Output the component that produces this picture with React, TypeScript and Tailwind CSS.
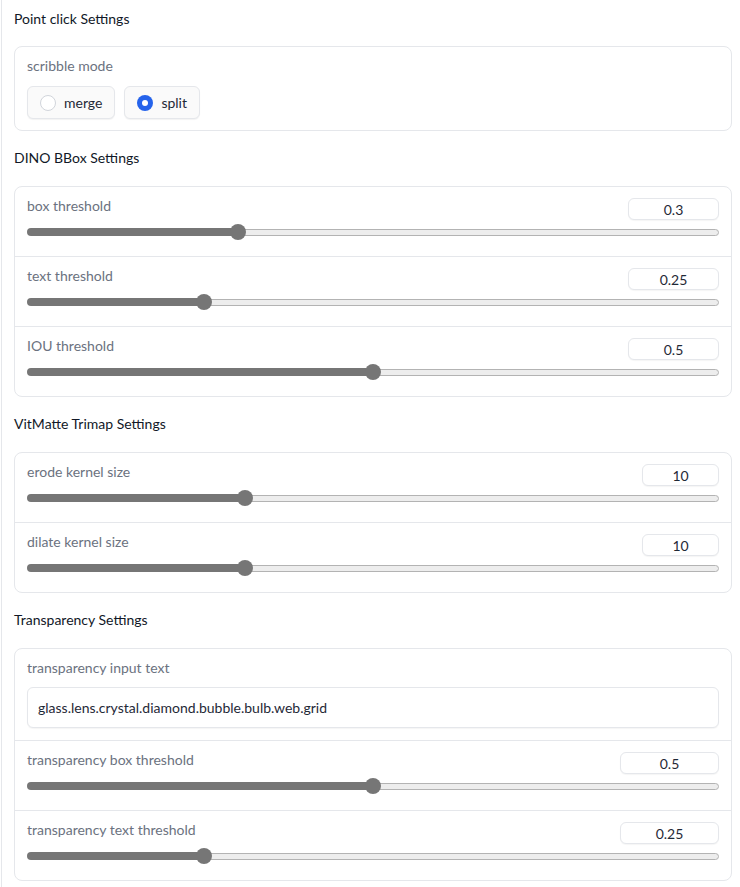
import React from "react";

const FONT = { fontFamily: "Lato, 'Noto Sans', 'Liberation Sans', sans-serif" };

function NumBox({ value, w }: { value: string; w: string }) {
  return (
    <div
      className={`${w} h-[22px] mt-[2px] rounded-md border border-[#e5e7eb] bg-white shadow-[0_1px_1px_rgba(0,0,0,0.04)] flex items-center justify-center text-[14px] text-[#1f2937]`}
    >
      {value}
    </div>
  );
}

function Slider({ frac }: { frac: number }) {
  const width = 692;
  const center = 8 + frac * (width - 16);
  return (
    <div className="mt-[3px] h-[18px] flex items-center">
      <div className="h-[8px] rounded-l-full bg-[#767676]" style={{ width: center }} />
      <div className="relative z-10 -mx-2 h-4 w-4 shrink-0 rounded-full bg-[#767676]" />
      <div className="h-[7px] flex-1 rounded-r-full border border-[#b3b3b3] bg-[#ededed]" />
    </div>
  );
}

function SliderRow({
  label,
  value,
  frac,
  boxW,
  first,
}: {
  label: string;
  value: string;
  frac: number;
  boxW: string;
  first?: boolean;
}) {
  return (
    <div className={`px-3 pt-[9px] pb-[15px] ${first ? "" : "border-t border-[#e5e7eb]"}`}>
      <div className="flex items-start justify-between">
        <div className="text-[14px] leading-[20px] text-[#6b7280]">{label}</div>
        <NumBox value={value} w={boxW} />
      </div>
      <Slider frac={frac} />
    </div>
  );
}

function Header({ children, first }: { children: React.ReactNode; first?: boolean }) {
  return (
    <div
      className={`${first ? "pt-[9px] pb-[17px]" : "mt-[9px] pt-[8px] pb-[18px]"} text-[14px] leading-[20px] font-normal text-[#111827]`}
    >
      {children}
    </div>
  );
}

function Card({ children }: { children: React.ReactNode }) {
  return <div className="rounded-lg border border-[#e5e7eb] bg-white">{children}</div>;
}

function Radio({ label, checked }: { label: string; checked?: boolean }) {
  return (
    <div className="h-[33px] flex items-center gap-2 px-[12px] rounded-md border border-[#e5e7eb] bg-[#fafafa] shadow-[0_1px_1px_rgba(0,0,0,0.05)]">
      {checked ? (
        <div className="w-4 h-4 rounded-full bg-[#2563eb] flex items-center justify-center">
          <div className="w-[6px] h-[6px] rounded-full bg-white" />
        </div>
      ) : (
        <div className="w-4 h-4 rounded-full border border-[#d1d5db] bg-white" />
      )}
      <span className="text-[14px] text-[#1f2937]">{label}</span>
    </div>
  );
}

export default function App() {
  return (
    <div className="w-[740px] min-h-[887px] bg-white" style={FONT}>
      <div className="ml-px min-h-[887px] border-l border-[#e5e7eb] pl-[12px] pr-2">
        <Header first>Point click Settings</Header>
        <Card>
          <div className="px-3 pt-[9px] pb-[11px]">
            <div className="text-[14px] leading-[20px] text-[#6b7280]">scribble mode</div>
            <div className="mt-[10px] flex gap-[9px]">
              <Radio label="merge" />
              <Radio label="split" checked />
            </div>
          </div>
        </Card>

        <Header>DINO BBox Settings</Header>
        <Card>
          <SliderRow first label="box threshold" value="0.3" frac={0.3} boxW="w-[91px]" />
          <SliderRow label="text threshold" value="0.25" frac={0.25} boxW="w-[91px]" />
          <SliderRow label="IOU threshold" value="0.5" frac={0.5} boxW="w-[91px]" />
        </Card>

        <Header>VitMatte Trimap Settings</Header>
        <Card>
          <SliderRow first label="erode kernel size" value="10" frac={9 / 29} boxW="w-[77px]" />
          <SliderRow label="dilate kernel size" value="10" frac={9 / 29} boxW="w-[77px]" />
        </Card>

        <Header>Transparency Settings</Header>
        <Card>
          <div className="px-3 pt-[9px] pb-3">
            <div className="text-[14px] leading-[20px] text-[#6b7280]">transparency input text</div>
            <div className="mt-[9px] h-[41px] rounded-md border border-[#e5e7eb] bg-white shadow-[0_1px_1px_rgba(0,0,0,0.04)] flex items-center px-[10px] text-[14px] text-[#1f2937]">
              glass.lens.crystal.diamond.bubble.bulb.web.grid
            </div>
          </div>
          <SliderRow label="transparency box threshold" value="0.5" frac={0.5} boxW="w-[99px]" />
          <SliderRow label="transparency text threshold" value="0.25" frac={0.25} boxW="w-[99px]" />
        </Card>
      </div>
    </div>
  );
}
